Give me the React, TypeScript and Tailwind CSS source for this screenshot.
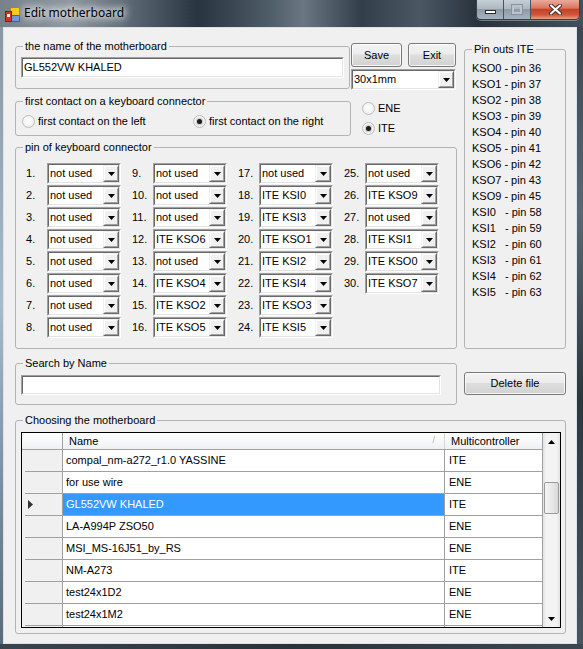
import React from "react";

function DownTri() {
  return (
    <svg width="7" height="4" viewBox="0 0 7 4">
      <path d="M0 0H7L3.5 4Z" fill="#000" />
    </svg>
  );
}

function Sunken({ className = "", children }: { className?: string; children?: React.ReactNode }) {
  return (
    <div className={`flex border border-t-[#a0a0a0] border-l-[#a0a0a0] border-r-white border-b-white ${className}`}>
      <div className="flex flex-1 min-w-0 border border-t-[#696969] border-l-[#696969] border-r-[#e3e3e3] border-b-[#e3e3e3] bg-white">
        {children}
      </div>
    </div>
  );
}

function Combo({ value, className = "" }: { value: string; className?: string }) {
  return (
    <Sunken className={`h-[21px] ${className}`}>
      <div className="flex-1 min-w-0 pl-[1px] leading-[17px] whitespace-nowrap overflow-hidden">{value}</div>
      <div className="w-[16px] h-full border border-t-[#f0f0f0] border-l-[#f0f0f0] border-r-[#696969] border-b-[#696969] bg-[#f0f0f0]">
        <div className="w-full h-full border border-t-white border-l-white border-r-[#a0a0a0] border-b-[#a0a0a0] flex items-center justify-center">
          <DownTri />
        </div>
      </div>
    </Sunken>
  );
}

function WinButton({ className = "", children }: { className?: string; children: React.ReactNode }) {
  return (
    <div
      className={`flex items-center justify-center rounded-[3px] border border-[#7a7a7a] bg-[linear-gradient(180deg,#f3f3f3_0%,#ececec_45%,#dedede_50%,#d2d2d2_100%)] shadow-[inset_0_0_0_1px_rgba(255,255,255,0.75)] ${className}`}
    >
      {children}
    </div>
  );
}

function Radio({ checked = false, label, className = "" }: { checked?: boolean; label: string; className?: string }) {
  return (
    <div className={`flex items-center ${className}`}>
      <div className="w-[13px] h-[13px] shrink-0 rounded-full border border-[#bdbdbd] bg-[radial-gradient(circle_at_50%_45%,#ffffff_0%,#f4f4f4_55%,#e0e0e0_100%)] flex items-center justify-center">
        {checked && <div className="w-[5px] h-[5px] rounded-full bg-[#1c1c1c] shadow-[0_0_1px_1px_rgba(110,110,110,0.4)]" />}
      </div>
      <span className="leading-[13px] ml-[3px] whitespace-nowrap">{label}</span>
    </div>
  );
}

function Group({ label, className = "", children }: { label: string; className?: string; children?: React.ReactNode }) {
  return (
    <fieldset className={`min-w-0 box-border border border-[#b4b4b4] rounded-[3px] ${className}`}>
      <legend className="ml-[7px] px-[2px] leading-[13px] whitespace-nowrap">{label}</legend>
      {children}
    </fieldset>
  );
}

function TitleBar() {
  return (
    <div className="h-[27px] shrink-0 flex items-start bg-[linear-gradient(90deg,#76818a_0%,#8e98a0_12%,#5d6a75_22%,#28343f_34%,#4e5c68_46%,#6a7783_52%,#323f4a_62%,#4b5863_72%,#27323c_82%,#434f5a_100%)]">
      <svg className="ml-[5px] mt-[7px]" width="15" height="15" viewBox="0 0 15 15">
        <rect x="5.5" y="0.5" width="9" height="8" fill="#f6c81e" stroke="#a98510" />
        <rect x="6.5" y="8.5" width="8" height="6" fill="#6f97d9" stroke="#3b5fa0" />
        <rect x="0.5" y="4.5" width="6" height="10" fill="#d9321f" stroke="#8a1a10" />
        <rect x="2" y="7" width="3" height="3" fill="#fff" />
      </svg>
      <span className="ml-[4px] mt-[5px] text-[12px] leading-[16px] font-['Noto_Sans',sans-serif] text-black [text-shadow:0_0_6px_#fff,0_0_10px_#fff,0_0_12px_rgba(255,255,255,0.9)]">
        Edit motherboard
      </span>
      <div className="ml-auto mr-[3px] flex h-[20px] rounded-b-[5px] border border-t-0 border-[#36404a] overflow-hidden shadow-[0_1px_0_rgba(255,255,255,0.35)]">
        <div className="w-[27px] flex items-center justify-center border-r border-[#4a545e] bg-[linear-gradient(180deg,#c6cfd7_0%,#adb8c2_45%,#8e9ba7_50%,#a7b3be_100%)]">
          <div className="w-[11px] h-[4px] mt-[5px] bg-white border border-[#2d2d2d]" />
        </div>
        <div className="w-[27px] flex items-center justify-center border-r border-[#4a545e] bg-[linear-gradient(180deg,#c6cfd7_0%,#adb8c2_45%,#8e9ba7_50%,#a7b3be_100%)]">
          <div className="w-[10px] h-[9px] border-2 border-[#b9c3cc] shadow-[0_0_0_1px_#8793a0]" />
        </div>
        <div className="w-[48px] flex items-center justify-center bg-[linear-gradient(180deg,#e9aa9c_0%,#da7761_42%,#c4432a_50%,#d0563b_78%,#e8a083_100%)]">
          <svg width="13" height="11" viewBox="0 0 13 11">
            <path d="M2 1.5L11 9.5M11 1.5L2 9.5" stroke="#3a2a28" strokeWidth="4" strokeLinecap="round" />
            <path d="M2 1.5L11 9.5M11 1.5L2 9.5" stroke="#fff" strokeWidth="2.2" strokeLinecap="round" />
          </svg>
        </div>
      </div>
    </div>
  );
}

const pinCols: [number, string][][] = [
  [
    [1, "not used"], [2, "not used"], [3, "not used"], [4, "not used"],
    [5, "not used"], [6, "not used"], [7, "not used"], [8, "not used"],
  ],
  [
    [9, "not used"], [10, "not used"], [11, "not used"], [12, "ITE KSO6"],
    [13, "not used"], [14, "ITE KSO4"], [15, "ITE KSO2"], [16, "ITE KSO5"],
  ],
  [
    [17, "not used"], [18, "ITE KSI0"], [19, "ITE KSI3"], [20, "ITE KSO1"],
    [21, "ITE KSI2"], [22, "ITE KSI4"], [23, "ITE KSO3"], [24, "ITE KSI5"],
  ],
  [
    [25, "not used"], [26, "ITE KSO9"], [27, "not used"], [28, "ITE KSI1"],
    [29, "ITE KSO0"], [30, "ITE KSO7"],
  ],
];

const pinOuts = [
  "KSO0 - pin 36", "KSO1 - pin 37", "KSO2 - pin 38", "KSO3 - pin 39", "KSO4 - pin 40",
  "KSO5 - pin 41", "KSO6 - pin 42", "KSO7 - pin 43", "KSO9 - pin 45",
  "KSI0   - pin 58", "KSI1   - pin 59", "KSI2   - pin 60", "KSI3   - pin 61", "KSI4   - pin 62", "KSI5   - pin 63",
];

const rows: [string, string][] = [
  ["compal_nm-a272_r1.0 YASSINE", "ITE"],
  ["for use wire", "ENE"],
  ["GL552VW KHALED", "ITE"],
  ["LA-A994P ZSO50", "ENE"],
  ["MSI_MS-16J51_by_RS", "ENE"],
  ["NM-A273", "ITE"],
  ["test24x1D2", "ENE"],
  ["test24x1M2", "ENE"],
  ["", ""],
];

function ScrollArrow({ up }: { up?: boolean }) {
  return (
    <div className="h-[17px] shrink-0 flex items-center justify-center">
      <svg width="7" height="4" viewBox="0 0 7 4">
        <path d={up ? "M0 4H7L3.5 0Z" : "M0 0H7L3.5 4Z"} fill="#000" />
      </svg>
    </div>
  );
}

function Grid() {
  return (
    <div className="w-[540px] h-[196px] border border-black bg-white flex overflow-hidden">
      <div className="w-[521px] flex flex-col">
        <div className="h-[17px] shrink-0 flex border-b border-[#a0a0a0] bg-[linear-gradient(180deg,#ffffff_0%,#f7f8f9_50%,#eef0f2_100%)]">
          <div className="w-[41px] border-r border-[#a0a0a0]" />
          <div className="w-[382px] flex items-center pl-[6px] border-r border-[#d8d8d8]">
            <span>Name</span>
            <span className="ml-auto mr-[9px] text-[9px] text-[#b0b0b0]">/</span>
          </div>
          <div className="w-[98px] flex items-center pl-[6px] border-r border-[#a0a0a0]">Multicontroller</div>
        </div>
        {rows.map(([name, mc], i) => {
          const sel = i === 2;
          return (
            <div key={i} className="h-[22px] shrink-0 flex">
              <div className="w-[41px] flex flex-col border-r border-[#a0a0a0] bg-[#f0f0f0]">
                <div className="flex-1 flex items-center pl-[6px]">
                  {sel && (
                    <svg width="5" height="9" viewBox="0 0 5 9">
                      <path d="M0 0L5 4.5L0 9Z" fill="#333" />
                    </svg>
                  )}
                </div>
                <div className="h-[1px] ml-[3px] bg-[#a0a0a0]" />
              </div>
              <div
                className={`w-[382px] flex items-center pl-[3px] border-r border-b border-[#a0a0a0] ${sel ? "bg-[#3399ff] text-white" : ""}`}
              >
                {name}
              </div>
              <div className="w-[98px] flex items-center pl-[4px] border-r border-b border-[#a0a0a0]">{mc}</div>
            </div>
          );
        })}
      </div>
      <div className="w-[17px] flex flex-col bg-[linear-gradient(90deg,#e2e2e2_0%,#f3f3f3_20%,#f3f3f3_80%,#e2e2e2_100%)]">
        <ScrollArrow up />
        <div className="h-[32px] shrink-0" />
        <div className="h-[32px] shrink-0 mx-[1px] rounded-[2px] border border-[#9b9b9b] bg-[linear-gradient(90deg,#f4f4f4_0%,#e9e9e9_50%,#d8d8d8_100%)]" />
        <div className="flex-1" />
        <ScrollArrow />
      </div>
    </div>
  );
}

export default function App() {
  return (
    <div className="w-[583px] h-[649px] flex flex-col overflow-hidden bg-[#2f3a44] text-[11px] text-black font-['Liberation_Sans',Arial,sans-serif]">
      <TitleBar />
      <div className="flex h-[617px] shrink-0">
        <div className="w-[3px] bg-[linear-gradient(180deg,#8b97a2_0%,#a7bacb_45%,#7e94a9_70%,#5a6a78_100%)]" />
        <div className="w-[574px] h-[617px] border border-[#dbe1e6] bg-[#f0f0f0] pl-[11px] pt-[12px] flex flex-col">
          <div className="flex items-start">
            <div className="w-[442px] flex flex-col">
              <div className="flex h-[96px]">
                <div className="w-[335px] flex flex-col">
                  <Group label="the name of the motherboard" className="w-[335px] h-[49px]">
                    <div className="pt-[4px] pl-[5px]">
                      <Sunken className="w-[323px] h-[21px]">
                        <div className="pl-[1px] leading-[17px]">GL552VW KHALED</div>
                      </Sunken>
                    </div>
                  </Group>
                  <Group label="first contact on a keyboard connector" className="mt-[6px] w-[336px] h-[41px]">
                    <div className="pt-[7px] pl-[6px] flex items-center">
                      <Radio label="first contact on the left" className="w-[171px]" />
                      <Radio checked label="first contact on the right" />
                    </div>
                  </Group>
                </div>
                <div className="ml-[1px] w-[105px] flex flex-col">
                  <div className="flex mt-[3px]">
                    <WinButton className="w-[51px] h-[24px]">Save</WinButton>
                    <WinButton className="ml-[6px] w-[48px] h-[24px]">Exit</WinButton>
                  </div>
                  <Combo value="30x1mm" className="mt-[2px] w-[105px]" />
                  <div className="mt-[10px] h-[16px] pl-[11px] flex items-center">
                    <Radio label="ENE" />
                  </div>
                  <div className="mt-[5px] h-[15px] pl-[11px] flex items-center">
                    <Radio checked label="ITE" />
                  </div>
                </div>
              </div>
              <Group label="pin of keyboard connector" className="mt-[5px] w-[442px] h-[208px]">
                <div className="flex items-start pl-[10px] pt-[9px] gap-[11px]">
                  {pinCols.map((col, ci) => (
                    <div key={ci} className="flex flex-col gap-[1px]">
                      {col.map(([n, v]) => (
                        <div key={n} className="flex items-center h-[21px]">
                          <span className="w-[21px] leading-[13px]">{n}.</span>
                          <Combo value={v} className="w-[74px]" />
                        </div>
                      ))}
                    </div>
                  ))}
                </div>
              </Group>
            </div>
            <Group label="Pin outs ITE" className="ml-[7px] mt-[3px] w-[102px] h-[306px]">
              <div className="pt-[4px] pl-[7px] leading-[16px] whitespace-pre">
                {pinOuts.map((l) => (
                  <div key={l}>{l}</div>
                ))}
              </div>
            </Group>
          </div>
          <div className="flex items-start mt-[8px]">
            <Group label="Search by Name" className="w-[442px] h-[48px]">
              <div className="pt-[5px] pl-[5px]">
                <Sunken className="w-[420px] h-[20px]" />
              </div>
            </Group>
            <WinButton className="ml-[7px] mt-[15px] w-[102px] h-[23px]">Delete file</WinButton>
          </div>
          <div className="mt-[9px]">
            <Group label="Choosing the motherboard" className="w-[551px] h-[220px]">
              <div className="pt-[5px] pl-[5px]">
                <Grid />
              </div>
            </Group>
          </div>
        </div>
        <div className="flex-1 bg-[linear-gradient(180deg,#3b4651_0%,#5b6873_30%,#2c363f_60%,#4a5560_100%)]" />
      </div>
      <div className="flex-1 bg-[linear-gradient(90deg,#3a444d_0%,#2a3239_50%,#3d4751_100%)]" />
    </div>
  );
}
